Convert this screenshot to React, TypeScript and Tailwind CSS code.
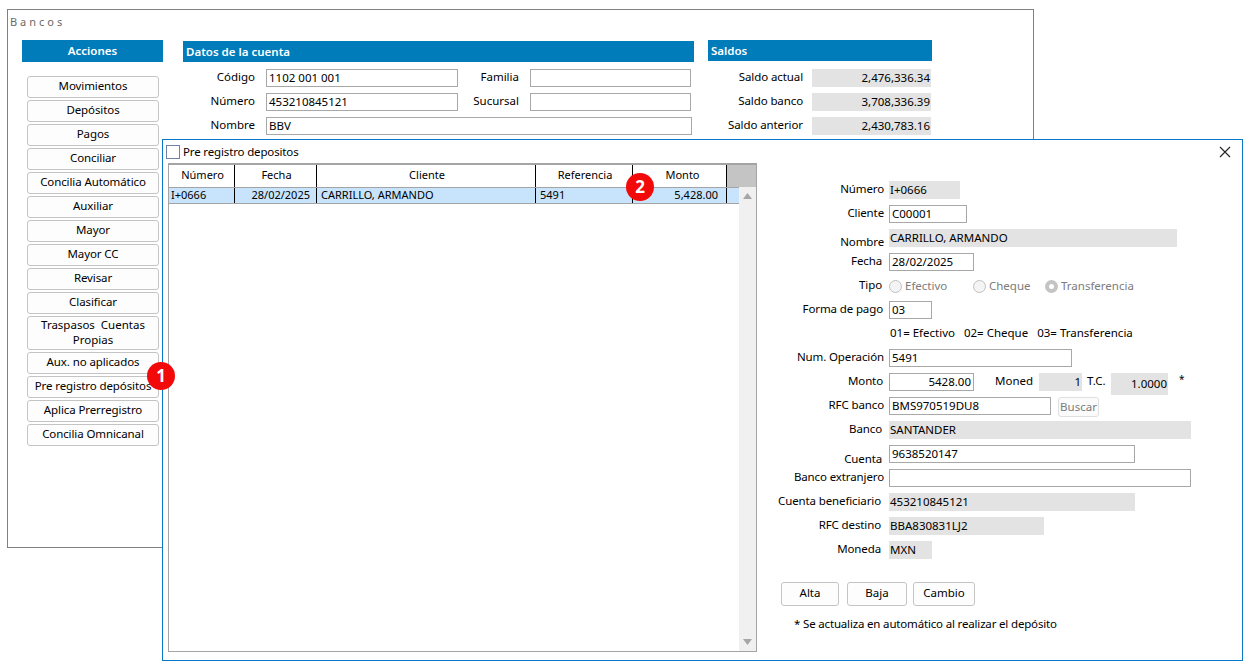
import type { ReactNode } from "react"

const acciones = [
  "Movimientos",
  "Depósitos",
  "Pagos",
  "Conciliar",
  "Concilia Automático",
  "Auxiliar",
  "Mayor",
  "Mayor CC",
  "Revisar",
  "Clasificar",
]

const accionesFin = ["Aux. no aplicados", "Pre registro depósitos", "Aplica Prerregistro", "Concilia Omnicanal"]

const saldos = [
  { label: "Saldo actual", value: "2,476,336.34" },
  { label: "Saldo banco", value: "3,708,336.39" },
  { label: "Saldo anterior", value: "2,430,783.16" },
]

function SideButton({ children, tall }: { children: ReactNode; tall?: boolean }) {
  return (
    <button
      className={
        tall
          ? "h-[34px] w-[132px] rounded-[3px] border border-[#c4c4c4] bg-[#fdfdfd] pb-[2px] text-center leading-[15px] text-black"
          : "h-[22px] w-[132px] rounded-[3px] border border-[#c4c4c4] bg-[#fdfdfd] pb-[2px] text-center leading-[18px] tracking-[-0.1px] text-black"
      }
    >
      {children}
    </button>
  )
}

function BlueHeader({ children, className }: { children: ReactNode; className: string }) {
  return <div className={`bg-[#007cba] font-semibold leading-[21px] text-white ${className}`}>{children}</div>
}

function TextBox({ value, width, right }: { value?: string; width: string; right?: boolean }) {
  return (
    <div
      className={`h-[18px] shrink-0 border border-[#a8a8a8] bg-white px-[2px] leading-[16px] text-black ${width} ${right ? "text-right" : ""}`}
    >
      {value}
    </div>
  )
}

function GrayBox({ value, width, right, tall }: { value?: string; width: string; right?: boolean; tall?: boolean }) {
  return (
    <div
      className={`shrink-0 bg-[#e3e3e3] px-[1px] text-black ${tall ? "h-[22px] leading-[21px]" : "h-[18px] leading-[18px]"} ${width} ${right ? "text-right" : ""}`}
    >
      {value}
    </div>
  )
}

function Row({ label, children, nudge }: { label: string; children: ReactNode; nudge?: string }) {
  return (
    <div className="flex h-[18px] items-start">
      <div
        className={`w-[132px] shrink-0 whitespace-nowrap pr-[5px] text-right leading-[16px] tracking-[-0.12px] text-black ${nudge ?? ""}`}
      >
        {label}
      </div>
      {children}
    </div>
  )
}

function Radio({ label, checked, width }: { label: string; checked?: boolean; width: string }) {
  return (
    <div className={`flex h-[18px] items-center gap-[3px] text-[#7c7c7c] ${width}`}>
      <span
        className={
          checked
            ? "flex size-[13px] items-center justify-center rounded-full bg-[#c4c4c4]"
            : "size-[13px] rounded-full border border-[#c0c0c0] bg-[#f4f4f4]"
        }
      >
        {checked ? <span className="size-[5px] rounded-full bg-white" /> : null}
      </span>
      {label}
    </div>
  )
}

function BancosWindow() {
  return (
    <section className="absolute left-[7px] top-[9px] h-[539px] w-[1027px] border border-[#808080] bg-white">
      <div className="pl-[2px] pt-[5px] text-[11px] leading-[14px] tracking-[0.27em] text-[#6a6a6a]">Bancos</div>
      <div className="mt-[11px] flex pl-[14px]">
        <div className="w-[141px]">
          <BlueHeader className="h-[22px] text-center">Acciones</BlueHeader>
          <div className="mt-[14px] flex flex-col gap-[2px] pl-[5px]">
            {acciones.map((a) => (
              <SideButton key={a}>{a}</SideButton>
            ))}
            <SideButton tall>
              Traspasos&nbsp; Cuentas
              <br />
              Propias
            </SideButton>
            {accionesFin.map((a) => (
              <SideButton key={a}>{a}</SideButton>
            ))}
          </div>
        </div>

        <div className="ml-[20px] w-[511px] pt-[1px]">
          <BlueHeader className="h-[21px] pl-[3px]">Datos de la cuenta</BlueHeader>
          <div className="mt-[7px] flex flex-col gap-[6px]">
            <div className="flex h-[18px]">
              <span className="w-[72px] text-right leading-[16px] text-black">Código</span>
              <span className="w-[11px]" />
              <TextBox value="1102 001 001" width="w-[192px]" />
              <span className="w-[61px] text-right leading-[16px] text-black">Familia</span>
              <span className="w-[11px]" />
              <TextBox width="w-[161px]" />
            </div>
            <div className="flex h-[18px]">
              <span className="w-[72px] text-right leading-[16px] text-black">Número</span>
              <span className="w-[11px]" />
              <TextBox value="453210845121" width="w-[192px]" />
              <span className="w-[61px] text-right leading-[16px] text-black">Sucursal</span>
              <span className="w-[11px]" />
              <TextBox width="w-[161px]" />
            </div>
            <div className="flex h-[18px]">
              <span className="w-[72px] text-right leading-[16px] text-black">Nombre</span>
              <span className="w-[11px]" />
              <TextBox value="BBV" width="w-[426px]" />
            </div>
          </div>
        </div>

        <div className="ml-[14px] w-[224px]">
          <BlueHeader className="h-[21px] pl-[3px]">Saldos</BlueHeader>
          <div className="mt-[8px] flex flex-col gap-[6px]">
            {saldos.map((s) => (
              <div key={s.label} className="flex h-[18px]">
                <span className="w-[95px] whitespace-nowrap text-right leading-[16px] tracking-[-0.1px] text-black">{s.label}</span>
                <span className="w-[9px]" />
                <GrayBox value={s.value} width="w-[119px]" right />
              </div>
            ))}
          </div>
        </div>
      </div>
    </section>
  )
}

function DepositTable() {
  const cols = "grid grid-cols-[66px_82px_219px_97px_94px_1fr]"
  const headerCell = "border-r border-black bg-white pl-[2px] text-center text-[11px] leading-[20px] text-black"

  return (
    <div className="flex h-[489px] w-[589px] shrink-0 flex-col border border-t-[2px] border-[#a4a4a4]">
      <div className={`${cols} h-[22px]`}>
        <div className={headerCell}>Número</div>
        <div className={headerCell}>Fecha</div>
        <div className={headerCell}>Cliente</div>
        <div className={headerCell}>Referencia</div>
        <div className="border-r border-black bg-white pl-[6px] text-center text-[11px] leading-[20px] text-black">Monto</div>
        <div className="bg-[#c4c4c4]" />
      </div>
      <div className="flex min-h-0 flex-1">
        <div className="flex-1">
          <div className={`${cols} h-[17px] border-y border-[#a4a4a4] bg-[#c8e4fc] text-[11px] leading-[13px] text-black`}>
            <div className="border-r border-black pl-[2px]">I+0666</div>
            <div className="border-r border-black pr-[6px] text-right">28/02/2025</div>
            <div className="border-r border-black pl-[4px]">CARRILLO, ARMANDO</div>
            <div className="border-r border-black pl-[4px]">5491</div>
            <div className="border-r border-black pr-[8px] text-right">5,428.00</div>
            <div />
          </div>
        </div>
        <div className="flex w-[17px] flex-col items-center justify-between bg-[#f0f0f0] py-[6px]">
          <svg width="9" height="6" viewBox="0 0 9 6">
            <path d="M4.5 0 9 6H0z" fill="#a6a6a6" />
          </svg>
          <svg width="9" height="6" viewBox="0 0 9 6">
            <path d="M0 0h9L4.5 6z" fill="#a6a6a6" />
          </svg>
        </div>
      </div>
    </div>
  )
}

function DepositForm() {
  return (
    <div className="flex-1 pt-[18px]">
      <div className="flex flex-col gap-[6px]">
        <Row label="Número"><GrayBox value="I+0666" width="w-[71px]" /></Row>
        <Row label="Cliente"><TextBox value="C00001" width="w-[78px]" /></Row>
        <Row label="Nombre" nudge="pt-[5px]"><GrayBox value="CARRILLO, ARMANDO" width="w-[288px]" /></Row>
        <Row label="Fecha" nudge="pr-[7px]"><TextBox value="28/02/2025" width="w-[85px]" /></Row>
        <Row label="Tipo" nudge="pr-[7px]">
          <Radio label="Efectivo" width="w-[84px]" />
          <Radio label="Cheque" width="w-[72px]" />
          <Radio label="Transferencia" checked width="w-[110px]" />
        </Row>
        <Row label="Forma de pago" nudge="pr-[6px]"><TextBox value="03" width="w-[43px]" /></Row>
        <Row label="">
          <div className="whitespace-nowrap pl-[1px] leading-[16px] text-black">
            01= Efectivo&nbsp;&nbsp; 02= Cheque&nbsp;&nbsp; 03= Transferencia
          </div>
        </Row>
        <Row label="Num. Operación"><TextBox value="5491" width="w-[183px]" /></Row>
        <Row label="Monto" nudge="pr-[6px]">
          <TextBox value="5428.00" width="w-[85px]" right />
          <span className="ml-[21px] w-[44px] leading-[16px] text-black">Moned</span>
          <GrayBox value="1" width="w-[43px]" right />
          <span className="ml-[5px] w-[24px] leading-[16px] text-black">T.C.</span>
          <GrayBox value="1.0000" width="w-[57px]" right tall />
          <span className="ml-[11px] text-[10px] leading-[12px] text-black">*</span>
        </Row>
        <Row label="RFC banco">
          <TextBox value="BMS970519DU8" width="w-[162px]" />
          <button className="ml-[7px] h-[20px] w-[41px] rounded-[3px] border border-[#e0e0e0] bg-[#fbfbfb] leading-[18px] text-[#7c7c7c]">
            Buscar
          </button>
        </Row>
        <Row label="Banco" nudge="pr-[7px]"><GrayBox value="SANTANDER" width="w-[302px]" /></Row>
        <Row label="Cuenta" nudge="pt-[6px] pr-[7px]"><TextBox value="9638520147" width="w-[246px]" /></Row>
        <Row label="Banco extranjero"><TextBox width="w-[302px]" /></Row>
        <Row label="Cuenta beneficiario" nudge="pr-[8px]"><GrayBox value="453210845121" width="w-[246px]" /></Row>
        <Row label="RFC destino" nudge="pr-[8px]"><GrayBox value="BBA830831LJ2" width="w-[155px]" /></Row>
        <Row label="Moneda" nudge="pr-[8px]"><GrayBox value="MXN" width="w-[43px]" /></Row>
      </div>

      <div className="mt-[23px] flex pl-[24px] text-black">
        <button className="h-[24px] w-[58px] rounded-[3px] border border-[#c4c4c4] bg-[#fdfdfd] pb-[2px]">Alta</button>
        <button className="ml-[8px] h-[24px] w-[60px] rounded-[3px] border border-[#c4c4c4] bg-[#fdfdfd] pb-[2px]">Baja</button>
        <button className="ml-[6px] h-[24px] w-[62px] rounded-[3px] border border-[#c4c4c4] bg-[#fdfdfd] pb-[2px]">Cambio</button>
      </div>
      <div className="mt-[9px] pl-[37px] leading-[18px] tracking-[-0.17px] text-black">
        * Se actualiza en automático al realizar el depósito
      </div>
    </div>
  )
}

function RegistroDialog() {
  return (
    <section className="absolute left-[162px] top-[139px] h-[522px] w-[1081px] border border-[#0a78c8] bg-white">
      <div className="flex h-[23px] items-center justify-between pl-[3px] pr-[11px]">
        <div className="flex items-center gap-[3px] tracking-[-0.15px] text-black">
          <span className="size-[14px] border border-[#6d83a5] bg-white" />
          Pre registro depositos
        </div>
        <svg width="12" height="12" viewBox="0 0 12 12" fill="none" stroke="#222" strokeWidth="1.1">
          <path d="M1 1l10 10M11 1 1 11" />
        </svg>
      </div>
      <div className="flex pl-[5px]">
        <DepositTable />
        <DepositForm />
      </div>
    </section>
  )
}

function Badge({ n, className }: { n: number; className: string }) {
  return (
    <div
      className={`absolute flex size-[28px] items-center justify-center rounded-full bg-[#f20a0a] text-[17px] font-bold text-white ${className}`}
    >
      {n}
    </div>
  )
}

export default function App() {
  return (
    <div className="relative h-[670px] w-[1255px] overflow-hidden bg-white font-['Noto_Sans',sans-serif] text-[11.5px]">
      <BancosWindow />
      <RegistroDialog />
      <Badge n={1} className="left-[147px] top-[362px]" />
      <Badge n={2} className="left-[626px] top-[173px]" />
    </div>
  )
}
